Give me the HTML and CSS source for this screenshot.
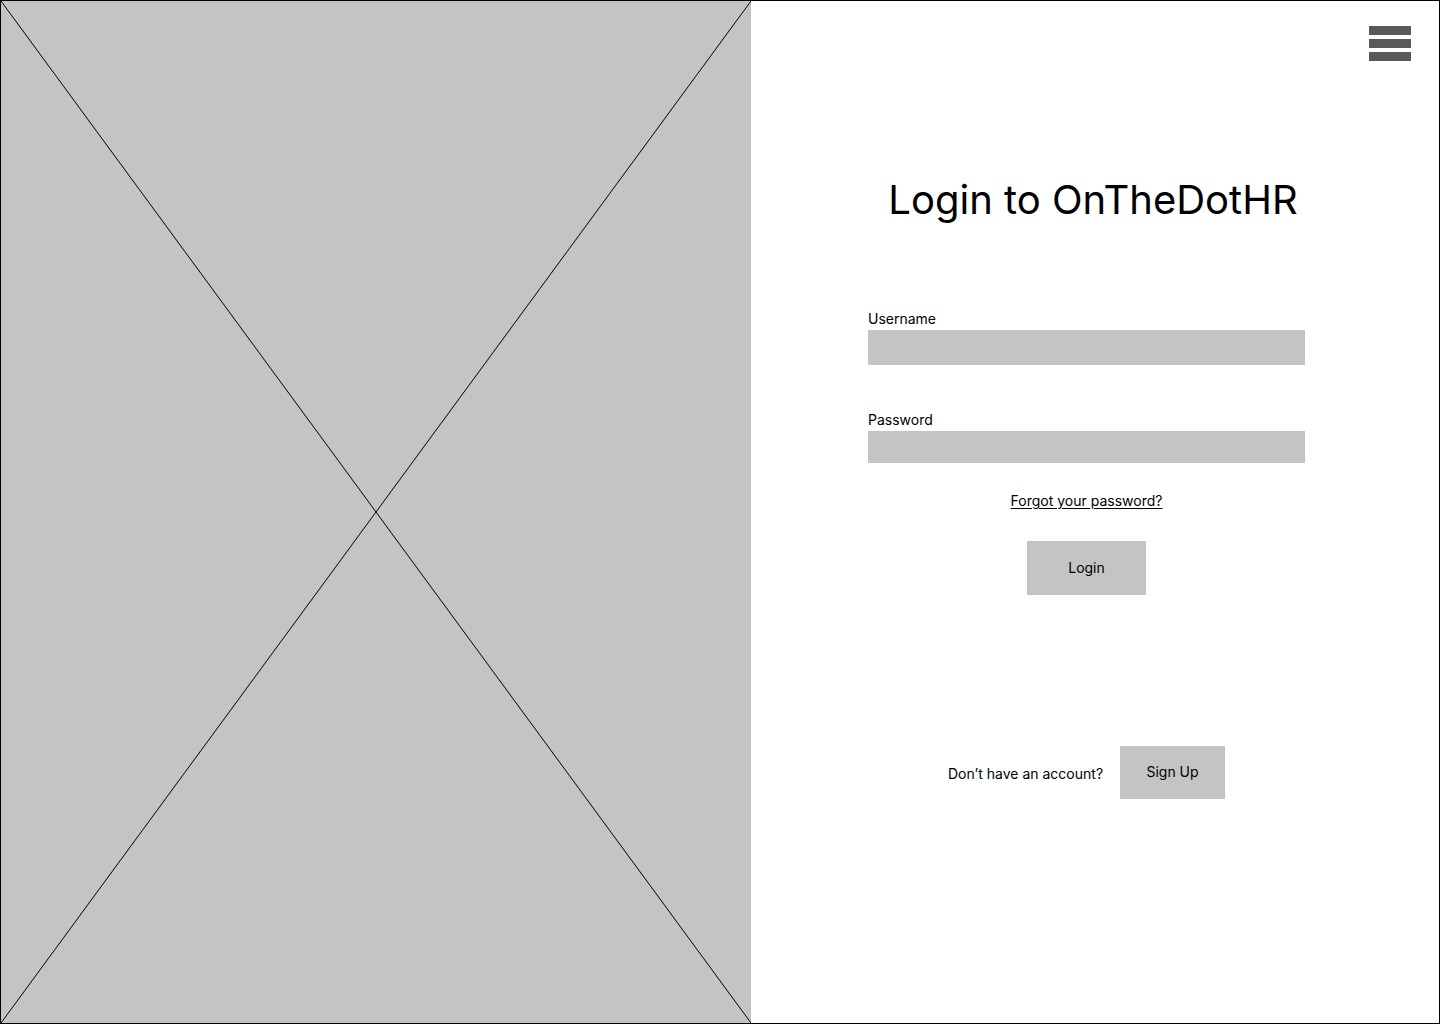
FILE: index.html
```html
<!DOCTYPE html>
<html lang="en">
<head>
<meta charset="utf-8">
<title>Login to OnTheDotHR</title>
<link rel="stylesheet" href="styles.css">
</head>
<body>
<div class="frame">
  <div class="hero">
    <svg class="hero-x" viewBox="0 0 750 1022" preserveAspectRatio="none" aria-hidden="true">
      <line x1="0" y1="0" x2="750" y2="1022" stroke="#000" stroke-width="1" vector-effect="non-scaling-stroke"/>
      <line x1="750" y1="0" x2="0" y2="1022" stroke="#000" stroke-width="1" vector-effect="non-scaling-stroke"/>
    </svg>
  </div>
  <div class="panel">
    <div class="topbar">
      <button class="menu" aria-label="Menu">
        <span class="bar"></span>
        <span class="bar"></span>
        <span class="bar"></span>
      </button>
    </div>
    <h1 class="title">Login to OnTheDotHR</h1>
    <form class="form">
      <div class="field field-user">
        <label class="label">Username</label>
        <div class="input"></div>
      </div>
      <div class="field field-pass">
        <label class="label">Password</label>
        <div class="input input-short"></div>
      </div>
      <a class="forgot" href="#">Forgot your password?</a>
      <div class="login-row">
        <button class="btn btn-login" type="button">Login</button>
      </div>
      <div class="signup-row">
        <span class="signup-text">Don’t have an account?</span>
        <button class="btn btn-signup" type="button">Sign Up</button>
      </div>
    </form>
  </div>
</div>
</body>
</html>
```
FILE: styles.css
```css
* { box-sizing: border-box; }
html, body { margin: 0; padding: 0; background: #fff; }
body { font-family: Inter, "Noto Sans", sans-serif; color: #000; }

.frame {
  width: 1440px;
  height: 1024px;
  border: 1px solid #000;
  display: flex;
}

.hero {
  width: 750px;
  height: 100%;
  background: #c4c4c4;
  position: relative;
  flex: none;
}
.hero-x {
  position: absolute;
  inset: 0;
  width: 100%;
  height: 100%;
  display: block;
}

.panel {
  flex: 1;
  display: flex;
  flex-direction: column;
  padding: 25px 28px 0 0;
}

.topbar { display: flex; justify-content: flex-end; }
.menu {
  width: 42px;
  height: 35px;
  padding: 0;
  border: 0;
  background: transparent;
  display: flex;
  flex-direction: column;
  gap: 4px;
}
.bar {
  display: block;
  width: 42px;
  height: 9px;
  background: #595959;
}

.title {
  margin: 115px 0 0 0;
  font-size: 40px;
  line-height: 48px;
  font-weight: 400;
  text-align: center;
  padding-left: 24px;
}

.form {
  width: 437px;
  margin: 86px 0 0 117px;
  display: flex;
  flex-direction: column;
}

.field { display: flex; flex-direction: column; gap: 3px; }
.field-pass { margin-top: 46px; }
.label { font-size: 14px; line-height: 17px; }
.input { height: 35px; background: #c4c4c4; }
.input.input-short { height: 32px; }

.forgot {
  align-self: center;
  margin-top: 29px;
  font-size: 14px;
  line-height: 17px;
  color: #000;
  text-decoration: underline;
  text-underline-offset: 2px;
}

.login-row { display: flex; justify-content: center; margin-top: 32px; }
.btn {
  border: 0;
  background: #c4c4c4;
  font-family: Inter, "Noto Sans", sans-serif;
  font-size: 14px;
  color: #000;
  padding: 0;
}
.btn-login { width: 119px; height: 54px; padding-bottom: 2px; }

.signup-row {
  display: flex;
  justify-content: center;
  align-items: center;
  gap: 17px;
  margin-top: 151px;
}
.signup-text { font-size: 14px; line-height: 17px; padding-top: 2px; }
.btn-signup { width: 105px; height: 53px; padding-bottom: 3px; }
```
